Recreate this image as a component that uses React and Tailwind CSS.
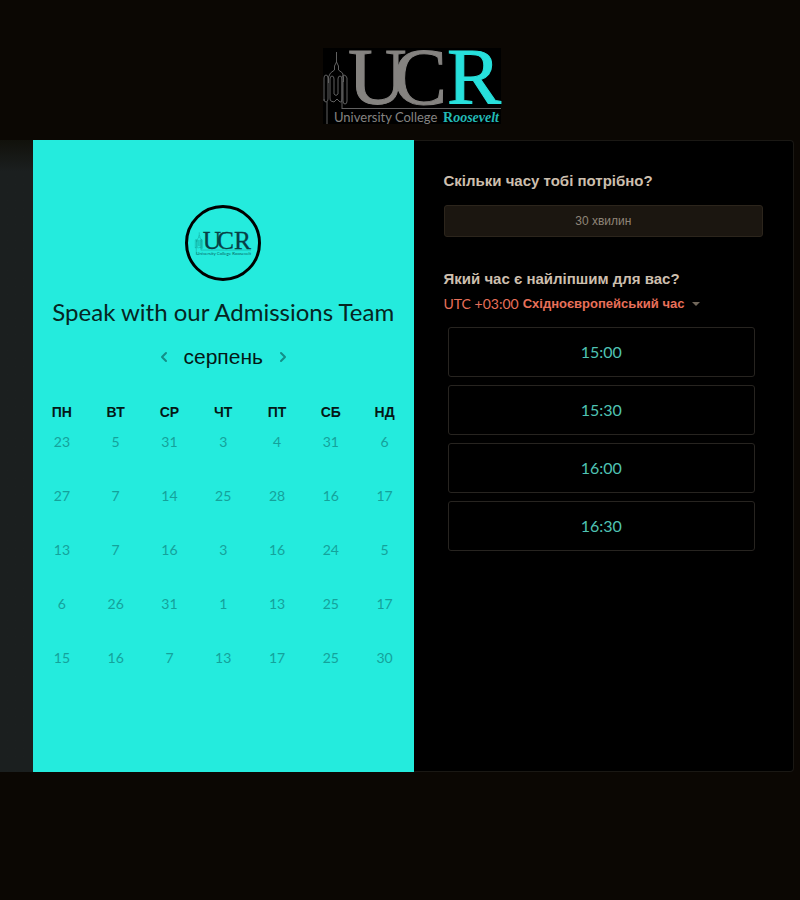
import React from "react";
import { ChevronLeft, ChevronRight } from "lucide-react";

const weekdays = ["ПН", "ВТ", "СР", "ЧТ", "ПТ", "СБ", "НД"];

const weeks = [
  [23, 5, 31, 3, 4, 31, 6],
  [27, 7, 14, 25, 28, 16, 17],
  [13, 7, 16, 3, 16, 24, 5],
  [6, 26, 31, 1, 13, 25, 17],
  [15, 16, 7, 13, 17, 25, 30],
];

const times = ["15:00", "15:30", "16:00", "16:30"];

function Tower() {
  return (
    <g fill="none" stroke="currentColor">
      <path d="M13.500 4v11M13.500 14l-2 4v4l-4 3-2 4v6M13.500 14l2 4v4l4 3 1 4v5" />
      <path d="M1 53V30q0-3 2-3t2 3v21q0 3-2 3t-2-3M4 54v22" />
      <path d="M7 50V31q0-3 2-3t2 3v15q2 3 4 0V31q0-3 2-3t2 3v20q0 4-2 3l-3-3-3 3-3-1q-1 0-1-3" />
      <path d="M19 61V30q0-3 2-3t3 3v23q0 3-2 3t-2-3V33" />
      <path d="M19 60.500H178" />
    </g>
  );
}

function Logo() {
  return (
    <svg viewBox="0 0 178 76" className="h-[76px] w-[178px] overflow-visible bg-black text-[#606060]" role="img" aria-label="University College Roosevelt">
      <Tower />
      <g className="font-['Liberation_Serif',serif]" fontSize="81" fill="#858380" stroke="#858380" strokeWidth="1">
        <text x="25" y="56">U</text>
        <text x="70" y="56">C</text>
        <text x="124" y="56" fill="#27e0dc" stroke="#27e0dc">R</text>
      </g>
      <text x="11" y="74" fontSize="13" fill="#858380" className="font-['Lato',sans-serif]">University College</text>
      <text x="120" y="74" fontSize="14" fill="#22b9b6" className="font-['Liberation_Serif',serif] font-bold">
        R<tspan className="italic">oosevelt</tspan>
      </text>
    </svg>
  );
}

function Avatar() {
  return (
    <div className="flex size-[76px] items-center justify-center rounded-full border-3 border-black">
      <svg viewBox="0 0 178 76" className="h-6 w-14 overflow-visible text-[#08766f]" role="img" aria-label="UCR">
        <Tower />
        <g className="font-['Liberation_Serif',serif]" fontSize="81" fill="#073f45" stroke="#073f45" strokeWidth="1">
          <text x="25" y="56">U</text>
          <text x="70" y="56">C</text>
          <text x="124" y="56">R</text>
        </g>
        <text x="4" y="75" fontSize="14" fill="#075f60" className="font-['Lato',sans-serif]">University College Roosevelt</text>
      </svg>
    </div>
  );
}

function Calendar() {
  return (
    <section className="flex flex-col items-center bg-[#24ebdd] px-0.5 pt-[65px] text-[#062522]">
      <Avatar />
      <h1 className="mt-[15px] text-2xl leading-8 whitespace-nowrap">Speak with our Admissions Team</h1>
      <div className="mt-[13px] flex h-8 items-center gap-3">
        <button type="button" aria-label="Попередній місяць" className="text-[#138f88]">
          <ChevronLeft size={16} strokeWidth={3} />
        </button>
        <h2 className="font-['Liberation_Sans',sans-serif] text-[21px] leading-8 text-[#041816]">серпень</h2>
        <button type="button" aria-label="Наступний місяць" className="text-[#138f88]">
          <ChevronRight size={16} strokeWidth={3} />
        </button>
      </div>
      <table className="mt-[27px] w-full table-fixed border-collapse text-center">
        <thead>
          <tr>
            {weekdays.map((day) => (
              <th key={day} scope="col" className="h-6 p-0 font-['Liberation_Sans',sans-serif] text-sm leading-6 font-bold text-[#041816]">
                {day}
              </th>
            ))}
          </tr>
        </thead>
        <tbody>
          {weeks.map((week, row) => (
            <tr key={row}>
              {week.map((date, col) => (
                <td key={col} className="h-[54px] p-0 align-top">
                  <button type="button" disabled className="h-9 w-full text-sm text-[#14a29b]">
                    {date}
                  </button>
                </td>
              ))}
            </tr>
          ))}
        </tbody>
      </table>
    </section>
  );
}

function Times() {
  return (
    <section className="rounded-r border-t border-r border-b border-[#1a1814] bg-black px-[30px] pt-7">
      <h2 className="font-['Liberation_Sans',sans-serif] text-[15px] leading-6 font-bold text-[#cdbfae]">Скільки часу тобі потрібно?</h2>
      <button type="button" className="mt-3 block h-8 w-full rounded-[3px] border border-[#2c251c] bg-[#1b1610] font-['Liberation_Sans',sans-serif] text-xs text-[#8f8578]">
        30 хвилин
      </button>
      <h2 className="mt-[30px] font-['Liberation_Sans',sans-serif] text-[15px] leading-6 font-bold text-[#cdbfae]">Який час є найліпшим для вас?</h2>
      <button type="button" aria-haspopup="listbox" className="flex h-[26px] items-center gap-1 whitespace-nowrap text-[#e8705a]">
        <span className="text-sm">UTC +03:00</span>
        <span className="font-['Liberation_Sans',sans-serif] text-[13px] font-bold">Східноєвропейський час</span>
        <svg viewBox="0 0 8 4" className="ml-1 h-1 w-2" aria-hidden="true">
          <path d="M0 0h8L4 4z" fill="#71675b" />
        </svg>
      </button>
      <ul className="mt-2.5 flex flex-col gap-2 pr-2 pl-1">
        {times.map((time) => (
          <li key={time}>
            <button type="button" className="block h-[50px] w-full rounded-[3px] border border-[#272420] text-base text-[#4fc3b3]">
              {time}
            </button>
          </li>
        ))}
      </ul>
    </section>
  );
}

export default function App() {
  return (
    <div className="min-h-screen bg-[#0b0703] font-['Lato',sans-serif]">
      <header className="flex justify-center pt-12 pb-4 pl-6">
        <Logo />
      </header>
      <main className="flex min-h-[632px] bg-linear-to-b from-[#11110b] via-[#1b1f1f] via-5% to-[#1b1f1f] pl-[33px]">
        <div className="grid flex-1 grid-cols-2 bg-[#0b0703] pr-1.5">
          <Calendar />
          <Times />
        </div>
      </main>
    </div>
  );
}
